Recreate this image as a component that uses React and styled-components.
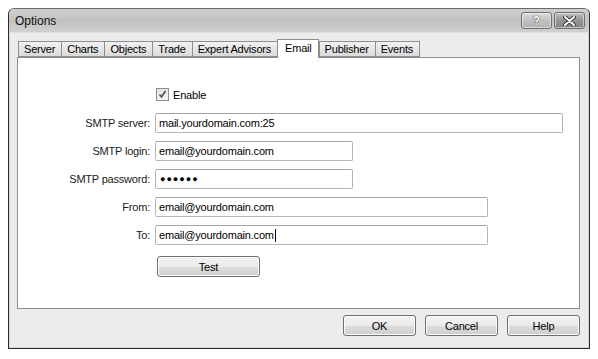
import { Fragment } from "react";
import styled, { createGlobalStyle } from "styled-components";

const GlobalStyle = createGlobalStyle`
  body {
    margin: 8px;
    background: #ffffff;
    font-family: "Liberation Sans", Arial, sans-serif;
    font-size: 11px;
    letter-spacing: -0.2px;
    color: #000;
  }
`;

const Window = styled.div`
  width: 582px;
  height: 341px;
  box-sizing: border-box;
  border: 1px solid #2b2b2b;
  border-top-color: #6a6a6a;
  border-radius: 6px 6px 0 0;
  background: #ececec;
  display: flex;
  flex-direction: column;
  overflow: hidden;
  box-shadow: inset 1px 0 0 #d6d6d6, inset -1px 0 0 #d6d6d6, inset 0 -1px 0 #d6d6d6;
`;

const TitleBar = styled.div`
  height: 23px;
  flex: none;
  display: flex;
  align-items: center;
  padding: 0 4px 0 6px;
  background: linear-gradient(#d0d0d0, #c2c2c2 50%, #d0d0d0);
  border-bottom: 1px solid #dedede;
`;

const Title = styled.div`
  flex: 1;
  font-size: 12px;
  letter-spacing: 0;
  color: #111;
`;

const CaptionButton = styled.button`
  width: ${(p) => p.$w}px;
  height: 17px;
  margin-left: 2px;
  padding: 0;
  display: flex;
  align-items: center;
  justify-content: center;
  border: 1px solid #6e6e6e;
  border-radius: 3px;
  background: ${(p) =>
    p.$close
      ? "linear-gradient(#c0c0c0, #949494 50%, #848484)"
      : "linear-gradient(#dcdcdc, #c0c0c0 50%, #b4b4b4)"};
  box-shadow: inset 0 0 0 1px rgba(255, 255, 255, 0.5);
  color: #ffffff;
  text-shadow: 0 0 1px #333, 0 0 1px #333;
  font-family: "Liberation Sans", Arial, sans-serif;
  font-size: 12px;
  font-weight: bold;
`;

const Body = styled.div`
  flex: 1;
  display: flex;
  flex-direction: column;
  padding: 8px 10px 12px 8px;
`;

const TabStrip = styled.div`
  display: flex;
  align-items: flex-end;
  height: 16px;
  padding-left: 1px;
  position: relative;
  z-index: 1;
`;

const Tab = styled.div`
  box-sizing: border-box;
  height: ${(p) => (p.$active ? 19 : 16)}px;
  padding: ${(p) => (p.$active ? "2px 6px 0 7px" : "1px 6px 0 5px")};
  margin-bottom: ${(p) => (p.$active ? -1 : 0)}px;
  border: 1px solid #8c8e94;
  border-right: ${(p) => (p.$active ? "1px solid #8c8e94" : "none")};
  border-bottom: ${(p) => (p.$active ? "none" : "1px solid #8c8e94")};
  background: ${(p) =>
    p.$active ? "#ffffff" : "linear-gradient(#f2f2f2, #e6e6e6 50%, #dadada)"};
  line-height: 13px;
  white-space: nowrap;
  &:last-child {
    border-right: 1px solid #8c8e94;
  }
`;

const Panel = styled.div`
  height: 252px;
  box-sizing: border-box;
  width: 563px;
  border: 1px solid #8c8e94;
  background: #ffffff;
  padding-top: 30px;
`;

const Form = styled.div`
  display: grid;
  grid-template-columns: 132px 1fr;
  column-gap: 5px;
  row-gap: 8px;
  align-items: center;
`;

const CheckRow = styled.label`
  grid-column: 2;
  display: flex;
  align-items: center;
  gap: 4px;
  margin-left: 1px;
  margin-bottom: 4px;
`;

const CheckBox = styled.span`
  width: 11px;
  height: 11px;
  border: 1px solid #8f8f8f;
  background: linear-gradient(#e4e4e4, #f4f4f4);
  display: flex;
  align-items: center;
  justify-content: center;
`;

const Label = styled.div`
  text-align: right;
  color: #1a1a1a;
`;

const Field = styled.div`
  box-sizing: border-box;
  width: ${(p) => p.$w}px;
  height: 20px;
  border: 1px solid #b4b6bc;
  border-top-color: #a3a5ab;
  border-radius: 2px;
  padding: 0 3px;
  display: flex;
  align-items: center;
  white-space: nowrap;
  background: #fff;
`;

const Dots = styled.span`
  font-size: 9px;
  letter-spacing: 1px;
  margin-left: 1px;
`;

const Caret = styled.span`
  display: inline-block;
  width: 1px;
  height: 13px;
  background: #000;
  margin-left: 1px;
`;

const Button = styled.button`
  box-sizing: border-box;
  width: ${(p) => p.$w}px;
  height: 21px;
  padding: 0;
  border: 1px solid #707070;
  border-radius: 3px;
  background: linear-gradient(#f2f2f2, #ebebeb 50%, #dddddd 51%, #cfcfcf);
  box-shadow: inset 0 0 0 1px #fcfcfc;
  font-family: "Liberation Sans", Arial, sans-serif;
  font-size: 11px;
  letter-spacing: -0.2px;
  color: #000;
`;

const TestCell = styled.div`
  grid-column: 2;
  margin-top: 3px;
  margin-left: 2px;
`;

const Footer = styled.div`
  display: flex;
  justify-content: flex-end;
  gap: 9px;
  width: 563px;
  margin-top: 6px;
`;

const tabs = ["Server", "Charts", "Objects", "Trade", "Expert Advisors", "Email", "Publisher", "Events"];

const fields = [
  { label: "SMTP server:", w: 408, value: "mail.yourdomain.com:25" },
  { label: "SMTP login:", w: 198, value: "email@yourdomain.com" },
  { label: "SMTP password:", w: 198, password: true },
  { label: "From:", w: 333, value: "email@yourdomain.com" },
  { label: "To:", w: 333, value: "email@yourdomain.com", caret: true },
];

export default function App() {
  return (
    <>
      <GlobalStyle />
      <Window>
        <TitleBar>
          <Title>Options</Title>
          <CaptionButton $w={31}>?</CaptionButton>
          <CaptionButton $w={31} $close>
            <svg width="13" height="10" viewBox="0 0 13 10">
              <path d="M2 1 L11 9 M11 1 L2 9" stroke="#3a3a3a" strokeWidth="4" strokeLinecap="round" />
              <path d="M2 1 L11 9 M11 1 L2 9" stroke="#ffffff" strokeWidth="2" strokeLinecap="round" />
            </svg>
          </CaptionButton>
        </TitleBar>
        <Body>
          <TabStrip>
            {tabs.map((t) => (
              <Tab key={t} $active={t === "Email"}>
                {t}
              </Tab>
            ))}
          </TabStrip>
          <Panel>
            <Form>
              <CheckRow>
                <CheckBox>
                  <svg width="9" height="9" viewBox="0 0 9 9">
                    <path d="M1.5 4.5 L3.5 7 L7.5 1" fill="none" stroke="#4a4a4a" strokeWidth="1.6" />
                  </svg>
                </CheckBox>
                Enable
              </CheckRow>
              {fields.map((f) => (
                <Fragment key={f.label}>
                  <Label>{f.label}</Label>
                  <Field $w={f.w}>
                    {f.password ? <Dots>●●●●●●</Dots> : f.value}
                    {f.caret && <Caret />}
                  </Field>
                </Fragment>
              ))}
              <TestCell>
                <Button $w={103}>Test</Button>
              </TestCell>
            </Form>
          </Panel>
          <Footer>
            <Button $w={73}>OK</Button>
            <Button $w={73}>Cancel</Button>
            <Button $w={73}>Help</Button>
          </Footer>
        </Body>
      </Window>
    </>
  );
}
